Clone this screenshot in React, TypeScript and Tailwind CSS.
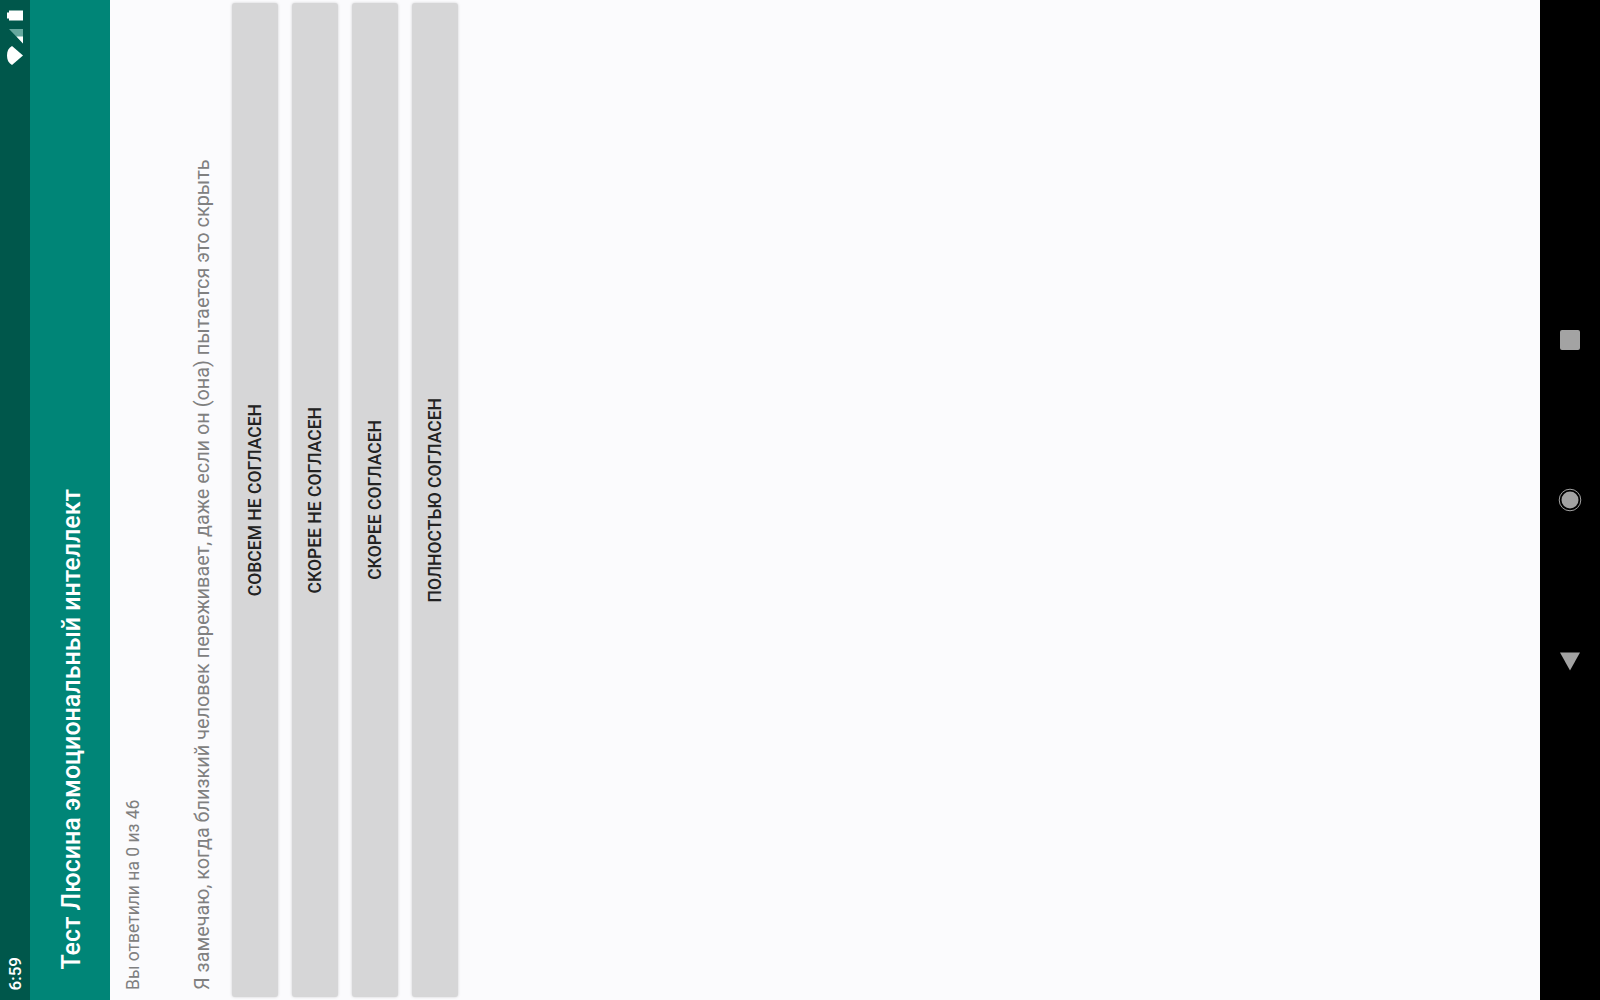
export default function App() {
  const answers = ["СОВСЕМ НЕ СОГЛАСЕН", "СКОРЕЕ НЕ СОГЛАСЕН", "СКОРЕЕ СОГЛАСЕН", "ПОЛНОСТЬЮ СОГЛАСЕН"];
  return (
    <div className="flex h-[1000px] w-[1600px] overflow-hidden bg-black font-['Roboto',sans-serif]">
      <div className="flex w-[30px] shrink-0 flex-col items-center justify-between bg-[#00574b] pb-[10px] text-white">
        <svg width="30" height="70" viewBox="0 0 30 70" fill="white">
          <path d="M7 12.5h2v-2h14v10H9v-2H7z" />
          <path d="M9 29h14v14.5z" fill="#66a89f" />
          <path d="M16.5 36.5H23v7z" />
          <path d="M12 46C8.5 48 7 51 7 55.5S8.5 63 12 65L23 55.5z" />
        </svg>
        <div className="rotate-180 text-[17px] font-medium leading-[20px] [writing-mode:vertical-rl]">6:59</div>
      </div>
      <div className="flex w-[80px] shrink-0 flex-col justify-end bg-[#008577] pb-[30px] pl-[27px]">
        <div className="rotate-180 whitespace-nowrap text-[25px] font-medium leading-[30px] text-white [writing-mode:vertical-rl]">
          Тест Люсина эмоциональный интеллект
        </div>
      </div>
      <div className="flex flex-1 bg-[#fbfbfd] pl-[13px]">
        <div className="mr-[47px] rotate-180 whitespace-nowrap pt-[10px] text-[17.5px] leading-[20px] text-[#808080] [writing-mode:vertical-rl]">
          Вы ответили на 0 из 46
        </div>
        <div className="mr-[16px] rotate-180 whitespace-nowrap pt-[10px] text-[19.85px] leading-[26px] text-[#808080] [writing-mode:vertical-rl]">
          Я замечаю, когда близкий человек переживает, даже если он (она) пытается это скрыть
        </div>
        <div className="flex gap-[14px] pb-[3px] pt-[3px]">
          {answers.map((a) => (
            <div key={a} className="flex w-[46px] items-center justify-center rounded-[3px] bg-[#d6d6d7] shadow-[0_0_3px_rgba(0,0,0,0.18)]">
              <div className="rotate-180 whitespace-nowrap text-[17.5px] font-medium leading-[20px] text-[#222222] [writing-mode:vertical-rl]">{a}</div>
            </div>
          ))}
        </div>
      </div>
      <div className="flex w-[60px] shrink-0 flex-col items-center gap-[138px] bg-black pt-[330px]">
        <div className="h-[20px] w-[20px] rounded-[2px] bg-[#a3a3a3]" />
        <svg width="24" height="24" viewBox="0 0 24 24">
          <circle cx="12" cy="12" r="8.5" fill="#a3a3a3" />
          <circle cx="12" cy="12" r="10.8" fill="none" stroke="#a3a3a3" strokeWidth="1" />
        </svg>
        <svg className="mt-[2px]" width="22" height="19" viewBox="0 0 22 19" fill="#a3a3a3">
          <path d="M1 0.5h20L11 18.5z" />
        </svg>
      </div>
    </div>
  );
}
